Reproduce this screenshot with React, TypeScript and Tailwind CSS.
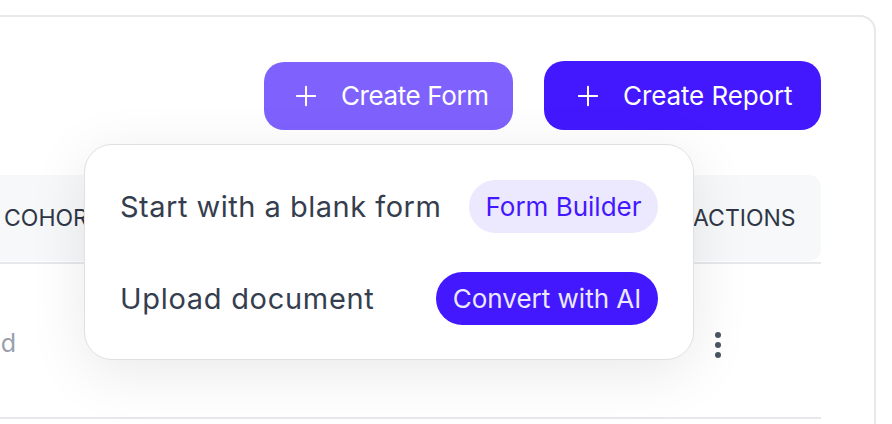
import React from "react";

function Plus({ className = "" }: { className?: string }) {
  return (
    <svg viewBox="0 0 24 24" className={className} fill="none" stroke="currentColor" strokeWidth={2.2} strokeLinecap="round">
      <path d="M12 2v20M2 12h20" />
    </svg>
  );
}

export default function App() {
  return (
    <div className="w-[892px] h-[424px] overflow-hidden bg-white font-['Inter','Liberation_Sans',sans-serif]">
      <div className="relative ml-[-24px] mt-[15px] w-[900px] h-[520px] rounded-[16px] border-2 border-[#e7e7ec] bg-white">
        <div className="pt-[44px] pr-[53px]">
          {/* Buttons */}
          <div className="flex justify-end items-center gap-[31px]">
            <button className="flex h-[68px] w-[249px] items-center rounded-[20px] bg-[#7f62fe] pl-[31px] text-[26px] text-white">
              <Plus className="h-[22px] w-[22px]" />
              <span className="ml-[24px] tracking-[-0.4px]">Create Form</span>
            </button>
            <button className="flex h-[69px] w-[277px] items-center rounded-[20px] bg-[#4318ff] pl-[33px] text-[26px] text-white">
              <Plus className="h-[22px] w-[22px]" />
              <span className="ml-[24px] tracking-[-0.1px]">Create Report</span>
            </button>
          </div>

          {/* Table */}
          <div className="mt-[45px]">
            <div className="flex h-[86px] items-center rounded-r-[12px] bg-[#f7f8fa] text-[23px] text-[#2f3746]">
              <div className="w-[130px] pl-[26px]">COHORT</div>
              <div className="flex-1" />
              <div className="w-[130px] pl-[2px]">ACTIONS</div>
            </div>
            <div className="mt-[1px] h-[2px] bg-[#e8e8ec]" />
            <div className="flex h-[153px] items-center">
              <div className="w-[38px] shrink-0 overflow-hidden">
                <div className="flex justify-end whitespace-nowrap text-[25px] text-[#9aa0ab] mt-[6px]">Archived</div>
              </div>
              <div className="flex-1" />
              <div className="w-[130px] pl-[24px] mt-[8px]">
                <div className="flex flex-col items-center gap-[4px] w-[6px]">
                  <span className="h-[6px] w-[6px] rounded-full bg-[#4b5563]" />
                  <span className="h-[6px] w-[6px] rounded-full bg-[#4b5563]" />
                  <span className="h-[6px] w-[6px] rounded-full bg-[#4b5563]" />
                </div>
              </div>
            </div>
            <div className="h-[2px] bg-[#e8e8ec]" />
          </div>
        </div>

        {/* Dropdown menu */}
        <div className="absolute left-[106px] top-[127px] w-[610px] rounded-[28px] border border-[#e0e0e4] bg-white pt-[35px] pb-[34px] px-[35px] shadow-[0_12px_60px_rgba(0,0,0,0.09)]">
          <div className="flex flex-col gap-[39px]">
            <div className="flex items-center justify-between">
              <span className="text-[29px] tracking-[0.5px] text-[#353e4e]">Start with a blank form</span>
              <span className="flex h-[53px] w-[189px] items-center justify-center rounded-full bg-[#ece8fe] text-[26px] text-[#4318ff]">
                Form Builder
              </span>
            </div>
            <div className="flex items-center justify-between">
              <span className="text-[29px] tracking-[0.7px] text-[#353e4e]">Upload document</span>
              <span className="flex h-[53px] w-[222px] items-center justify-center rounded-full bg-[#4318ff] text-[26px] text-[#ece9ff]">
                Convert with AI
              </span>
            </div>
          </div>
        </div>
      </div>
    </div>
  );
}
